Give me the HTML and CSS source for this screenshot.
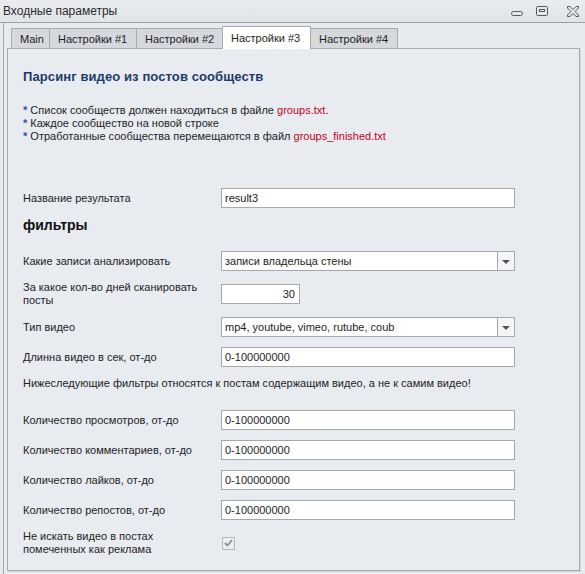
FILE: index.html
```html
<!DOCTYPE html>
<html lang="ru">
<head>
<meta charset="utf-8">
<title>Входные параметры</title>
<link rel="stylesheet" href="styles.css">
</head>
<body>
<div class="titlebar">
  <span class="title">Входные параметры</span>
  <div class="controls">
    <svg class="ctl ctl-min" width="14" height="8" viewBox="0 0 14 8"><rect x="1.5" y="2.5" width="11" height="4" rx="2" fill="none" stroke="#55595e" stroke-width="1"/></svg>
    <svg class="ctl ctl-max" width="12" height="10" viewBox="0 0 12 10"><rect x="0.5" y="0.5" width="11" height="9" rx="1" fill="none" stroke="#55595e"/><rect x="3.5" y="3.5" width="5" height="2" fill="none" stroke="#55595e"/></svg>
    <svg class="ctl ctl-close" width="12" height="11" viewBox="0 0 12 11"><path d="M0.5 0.5 H3 L6 3.5 L9 0.5 H11.5 V2 L8 5.5 L11.5 9 V10.5 H9 L6 7.5 L3 10.5 H0.5 V9 L4 5.5 L0.5 2 Z" fill="none" stroke="#55595e" stroke-width="1" stroke-linejoin="round"/></svg>
  </div>
</div>
<div class="frame">
  <div class="tabs">
    <div class="tab">Main</div>
    <div class="tab">Настройки #1</div>
    <div class="tab">Настройки #2</div>
    <div class="tab active">Настройки #3</div>
    <div class="tab">Настройки #4</div>
  </div>
  <div class="panel">
    <h1 class="heading">Парсинг видео из постов сообществ</h1>
    <ul class="notes">
      <li><span class="star">*</span> Список сообществ должен находиться в файле <span class="red">groups.txt</span>.</li>
      <li><span class="star">*</span> Каждое сообщество на новой строке</li>
      <li><span class="star">*</span> Отработанные сообщества перемещаются в файл <span class="red">groups_finished.txt</span></li>
    </ul>

    <div class="row row-first">
      <label class="label">Название результата</label>
      <div class="input">result3</div>
    </div>

    <h2 class="subheading">фильтры</h2>

    <div class="row row-after-sub">
      <label class="label">Какие записи анализировать</label>
      <div class="select"><span class="value">записи владельца стены</span><span class="drop"><span class="arrow"></span></span></div>
    </div>
    <div class="row">
      <label class="label">За какое кол-во дней сканировать<br>посты</label>
      <div class="input short">30</div>
    </div>
    <div class="row">
      <label class="label">Тип видео</label>
      <div class="select"><span class="value">mp4, youtube, vimeo, rutube, coub</span><span class="drop"><span class="arrow"></span></span></div>
    </div>
    <div class="row">
      <label class="label">Длинна видео в сек, от-до</label>
      <div class="input">0-100000000</div>
    </div>
    <p class="note">Нижеследующие фильтры относятся к постам содержащим видео, а не к самим видео!</p>
    <div class="row row-after-note">
      <label class="label">Количество просмотров, от-до</label>
      <div class="input">0-100000000</div>
    </div>
    <div class="row">
      <label class="label">Количество комментариев, от-до</label>
      <div class="input">0-100000000</div>
    </div>
    <div class="row">
      <label class="label">Количество лайков, от-до</label>
      <div class="input">0-100000000</div>
    </div>
    <div class="row">
      <label class="label">Количество репостов, от-до</label>
      <div class="input">0-100000000</div>
    </div>
    <div class="row">
      <label class="label">Не искать видео в постах<br>помеченных как реклама</label>
      <span class="checkbox"><svg width="9" height="8" viewBox="0 0 9 8"><path d="M1 4 L3.5 6.5 L8 1" fill="none" stroke="#8a8d91" stroke-width="1.8"/></svg></span>
    </div>
  </div>
</div>
</body>
</html>
```

FILE: styles.css
```css
* { box-sizing: border-box; }
html, body { margin: 0; padding: 0; }
body {
  width: 585px;
  height: 574px;
  overflow: hidden;
  background: #e7eaee;
  font-family: "Liberation Sans", Arial, sans-serif;
  font-size: 11px;
  color: #1e1e1e;
}
.titlebar {
  height: 23px;
  display: flex;
  align-items: center;
  justify-content: space-between;
  background: linear-gradient(#e9ebee, #e1e4e8);
  border-bottom: 1px solid #9ea2a7;
  padding-left: 3px;
}
.title {
  font-size: 12px;
  color: #2b2b2b;
  margin-top: -1px;
}
.controls {
  display: flex;
  align-items: center;
  height: 22px;
}
.ctl { display: block; }
.ctl-min { margin-right: 12px; margin-top: 3px; }
.ctl-max { margin-right: 19px; }
.ctl-close { margin-right: 6px; }

.frame {
  margin-left: 3px;
  border-left: 1px solid #a3a7ac;
  padding: 3px 0 0 3px;
  height: 551px;
}
.tabs {
  display: flex;
  align-items: flex-end;
  height: 22px;
  padding-left: 4px;
  position: relative;
  z-index: 1;
}
.tab {
  height: 20px;
  padding: 0 8px;
  display: flex;
  align-items: center;
  background: #d5d8dc;
  border: 1px solid #a6aaaf;
  border-bottom: none;
  margin-right: -1px;
  color: #1e1e1e;
  white-space: nowrap;
}
.tab:nth-child(1) { width: 39px; }
.tab:nth-child(2) { width: 88px; }
.tab:nth-child(3) { width: 87px; }
.tab:nth-child(4) { width: 89px; }
.tab:nth-child(5) { width: 88px; }
.tab.active {
  height: 23px;
  margin-bottom: -1px;
  background: #ffffff;
  padding-bottom: 1px;
}
.panel {
  width: 573px;
  height: 523px;
  border: 1px solid #a6aaaf;
  background: #e8ebf0;
  padding: 20px 0 0 15px;
  box-shadow: 1px 1px 0 #d4d7db;
}
.heading {
  margin: 0;
  font-size: 13px;
  line-height: 16px;
  font-weight: bold;
  color: #1c3c6a;
  letter-spacing: 0.1px;
}
.notes {
  list-style: none;
  margin: 19px 0 0 0;
  padding: 0;
  line-height: 13px;
}
.star { color: #2f4fd0; font-weight: bold; }
.red { color: #c8001c; }

.row {
  display: flex;
  align-items: center;
  margin-top: 10px;
  min-height: 20px;
}
.row-first { margin-top: 45px; }
.row-after-sub { margin-top: 17px; }
.row-after-note { margin-top: 20px; }
.label {
  width: 198px;
  line-height: 13px;
  flex: none;
}
.input, .select {
  height: 20px;
  width: 294px;
  border: 1px solid #a5a9ae;
  background: #ffffff;
  display: flex;
  align-items: center;
  padding-left: 3px;
  white-space: nowrap;
}
.input.short {
  width: 79px;
  justify-content: flex-end;
  padding-right: 4px;
}
.select { padding-left: 0; }
.select .value { flex: 1; padding-left: 3px; }
.drop {
  width: 17px;
  height: 18px;
  border-left: 1px solid #a5a9ae;
  background: #f4f5f7;
  display: flex;
  align-items: center;
  justify-content: center;
}
.arrow {
  width: 0;
  height: 0;
  border-left: 4px solid transparent;
  border-right: 4px solid transparent;
  border-top: 4px solid #505458;
  margin-top: 1px;
}
.subheading {
  margin: 8px 0 0 0;
  font-size: 14px;
  line-height: 18px;
  font-weight: bold;
  color: #111;
}
.note {
  margin: 10px 0 0 0;
  line-height: 13px;
}
.checkbox {
  width: 13px;
  height: 13px;
  border: 1px solid #b4b8bc;
  background: #eceef1;
  display: flex;
  align-items: center;
  justify-content: center;
  margin-left: 1px;
}
.checkbox svg { display: block; }
```
